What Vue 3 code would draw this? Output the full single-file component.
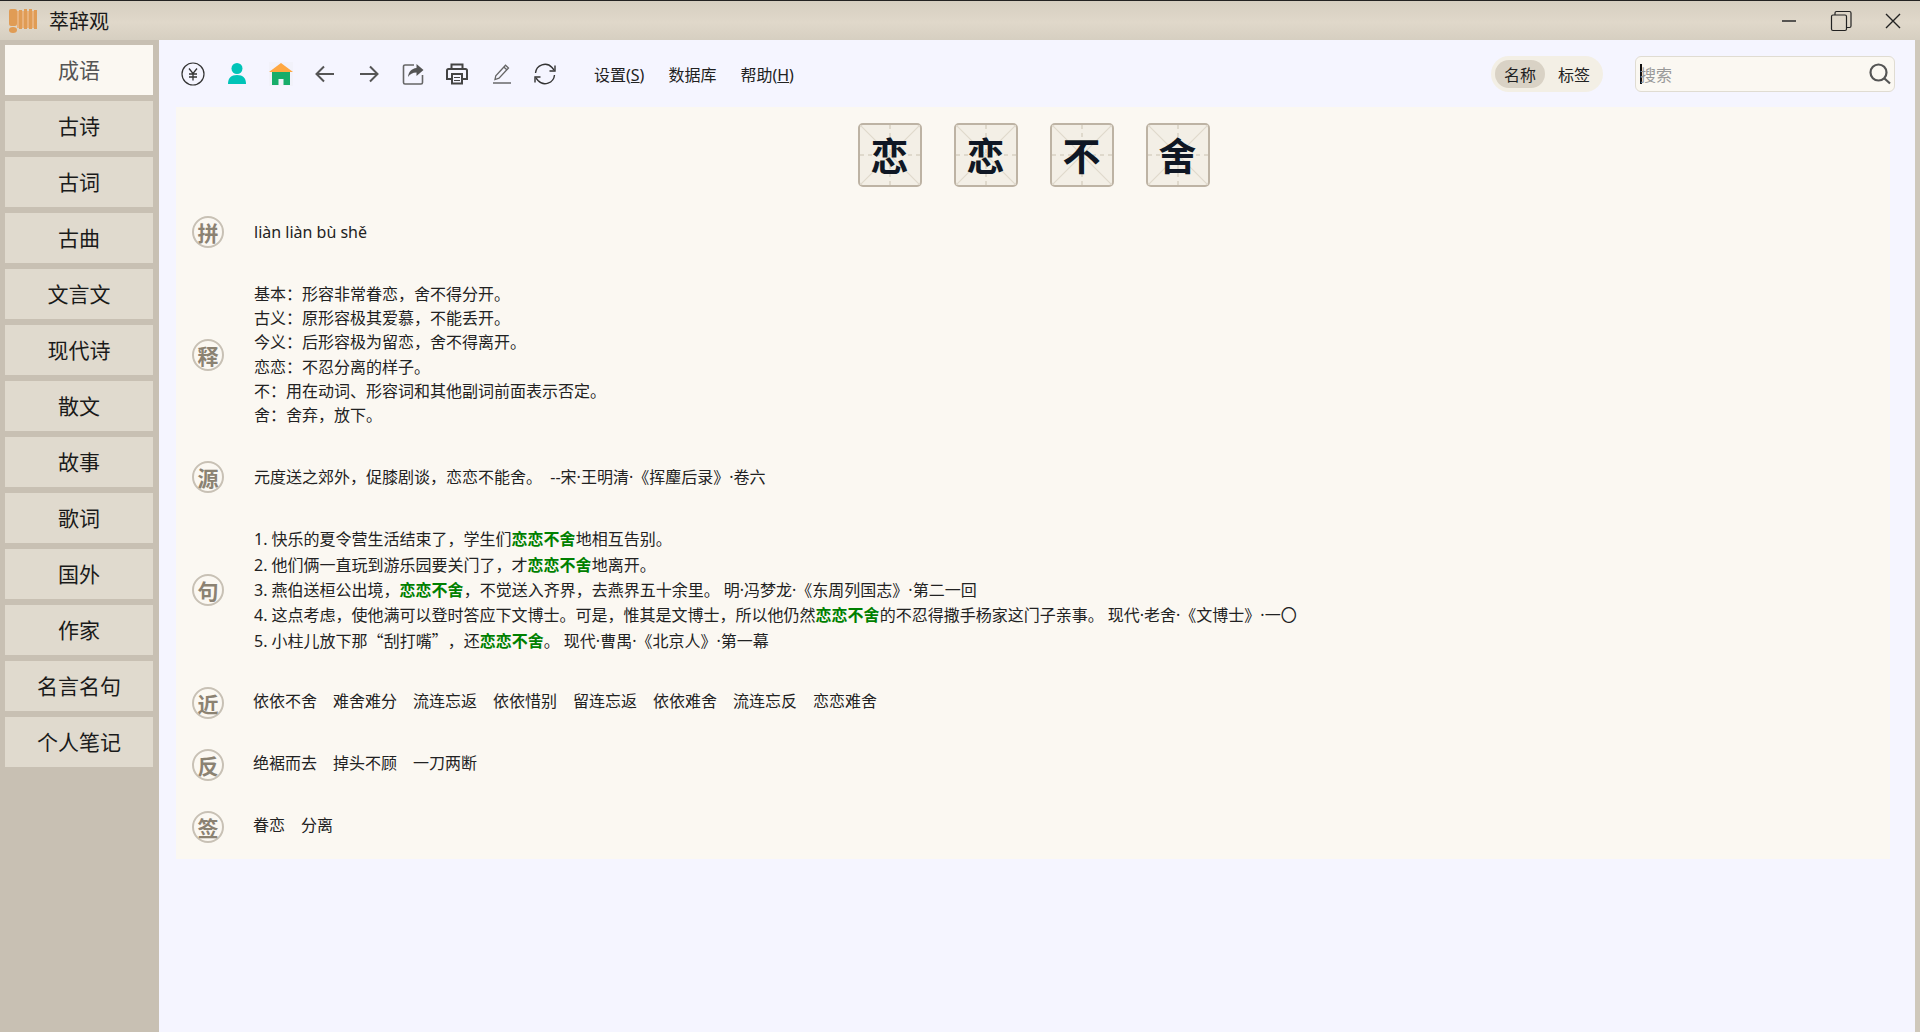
<script setup>
const tabs = ['成语','古诗','古词','古曲','文言文','现代诗','散文','故事','歌词','国外','作家','名言名句','个人笔记']
const chars = ['恋','恋','不','舍']
const meaning = ['基本：形容非常眷恋，舍不得分开。','古义：原形容极其爱慕，不能丢开。','今义：后形容极为留恋，舍不得离开。','恋恋：不忍分离的样子。','不：用在动词、形容词和其他副词前面表示否定。','舍：舍弃，放下。']
const near = ['依依不舍','难舍难分','流连忘返','依依惜别','留连忘返','依依难舍','流连忘反','恋恋难舍']
const anti = ['绝裾而去','掉头不顾','一刀两断']
const tags = ['眷恋','分离']
const sentences = [
  ['1. 快乐的夏令营生活结束了，学生们','地相互告别。'],
  ['2. 他们俩一直玩到游乐园要关门了，才','地离开。'],
  ['3. 燕伯送桓公出境，','，不觉送入齐界，去燕界五十余里。 明·冯梦龙·《东周列国志》·第二一回'],
  ['4. 这点考虑，使他满可以登时答应下文博士。可是，惟其是文博士，所以他仍然','的不忍得撒手杨家这门子亲事。 现代·老舍·《文博士》·一〇'],
]
</script>

<template>
  <div class="app">
    <header class="titlebar">
      <svg class="logo" viewBox="0 0 28 24" width="28" height="24">
        <rect x="8" y="2" width="20" height="17" fill="#e9b27c"/>
        <g fill="#e09c55">
          <rect x="0" y="0" width="8" height="17" rx="2"/><ellipse cx="4" cy="21" rx="4" ry="3"/>
          <rect x="10" y="1" width="3" height="19"/><rect x="15" y="0" width="3" height="20"/><rect x="20" y="0" width="3" height="20"/><rect x="25" y="1" width="3" height="19"/>
        </g>
      </svg>
      <span class="apptitle">萃辞观</span>
      <div class="winbtns">
        <svg width="16" height="16" viewBox="0 0 16 16"><path d="M1 8h14" stroke="#333" stroke-width="1.6"/></svg>
        <svg width="22" height="22" viewBox="0 0 22 22" fill="none" stroke="#222" stroke-width="1.2"><rect x="1.500" y="5" width="15" height="15.500" rx="1.500"/><path d="M5 5V3a1.500 1.500 0 0 1 1.500-1.500h13A1.500 1.500 0 0 1 21 3v13a1.500 1.500 0 0 1-1.500 1.500h-3"/></svg>
        <svg width="16" height="16" viewBox="0 0 16 16"><path d="M1 1l14 14M15 1L1 15" stroke="#222" stroke-width="1.400"/></svg>
      </div>
    </header>
    <div class="body">
      <nav class="side">
        <div v-for="(t,i) in tabs" :key="t" class="tab" :class="{active:i===0}">{{ t }}</div>
      </nav>
      <main class="main">
        <div class="toolbar">
          <div class="icons">
            <svg viewBox="0 0 24 24" class="ic"><circle cx="12" cy="12" r="11" fill="none" stroke="#333" stroke-width="1.200"/><path d="M8 6.500l4 5 4-5M12 11.500V18.500M8 12h8M8 15h8" fill="none" stroke="#333" stroke-width="1.300"/></svg>
            <svg viewBox="0 0 24 24" class="ic"><circle cx="12" cy="6.500" r="5.500" fill="#00c4b8"/><path d="M3 22c0-6 3-9 9-9s9 3 9 9z" fill="#00c4b8"/></svg>
            <svg viewBox="0 0 24 24" class="ic home"><path d="M12 1L0 10h24z" fill="#ffa842"/><path d="M3 10h18v13h-6.500v-6h-5v6H3z" fill="#17ad6a"/></svg>
            <svg viewBox="0 0 24 24" class="ic"><path d="M21 12H4M11 4.500L3.500 12l7.500 7.500" fill="none" stroke="#555" stroke-width="2"/></svg>
            <svg viewBox="0 0 24 24" class="ic"><path d="M3 12h17M13 4.500l7.500 7.500-7.500 7.500" fill="none" stroke="#555" stroke-width="2"/></svg>
            <svg viewBox="0 0 24 24" class="ic"><path d="M13 3H4a1.500 1.500 0 0 0-1.500 1.500v16A1.500 1.500 0 0 0 4 22h16a1.500 1.500 0 0 0 1.500-1.500V13" fill="none" stroke="#666" stroke-width="1.600"/><path d="M15.500 2l7 6-7 6v-3.500c-4 0-6.500 1.500-8.500 4.500 .5-5 3.500-8.500 8.500-9z" fill="#555"/></svg>
            <svg viewBox="0 0 24 24" class="ic"><path d="M6.500 7V2.500h11V7M6 17H2V8.500A1.500 1.500 0 0 1 3.500 7h17A1.500 1.500 0 0 1 22 8.500V17h-4" fill="none" stroke="#444" stroke-width="2"/><rect x="7" y="12" width="10" height="9.500" fill="none" stroke="#444" stroke-width="2"/><path d="M9 15.500h6M9 18.500h6" stroke="#444" stroke-width="1.200"/></svg>
            <svg viewBox="0 0 24 24" class="ic"><path d="M4 21h18" stroke="#444" stroke-width="1.200"/><path d="M6 17.500l.8-3.800L16.500 3.200l3 2.800L10 16.200z" fill="none" stroke="#666" stroke-width="1.300"/><path d="M14.800 5l3 2.800" stroke="#666" stroke-width="1.300"/></svg>
            <svg viewBox="0 0 24 24" class="ic"><path d="M2.500 11A9.500 9.500 0 0 1 19 5.500L21 8M21.500 13A9.500 9.500 0 0 1 5 18.500L3 16" fill="none" stroke="#333" stroke-width="1.400"/><path d="M22 3.500V9h-5.500M2 20.500V15h5.500" fill="none" stroke="#333" stroke-width="1.400"/></svg>
          </div>
          <div class="menu"><span>设置(<u>S</u>)</span><span>数据库</span><span>帮助(<u>H</u>)</span></div>
          <div class="pill"><span class="on">名称</span><span class="off">标签</span></div>
          <div class="search">
            <i class="caret"></i><span class="ph">搜索</span>
            <svg width="24" height="24" viewBox="0 0 24 24" fill="none" stroke="#555" stroke-width="2.200"><circle cx="10.500" cy="10.500" r="8"/><path d="M16.500 16.500l5.500 5"/></svg>
          </div>
        </div>
        <section class="card">
          <div class="heading">
            <div v-for="(c,i) in chars" :key="i" class="cell">
              <svg class="grid" viewBox="0 0 60 60"><path d="M0 0L60 60M60 0L0 60" stroke="#dfd9cc" stroke-width="1.200"/><path d="M30 0V60M0 30H60" stroke="#d9d2c3" stroke-width="1.500" stroke-dasharray="4 4"/></svg>
              <span>{{ c }}</span>
            </div>
          </div>
          <div class="row"><b class="seal">拼</b><div class="txt">liàn liàn bù shě</div></div>
          <div class="row"><b class="seal">释</b><div class="txt multi"><div v-for="m in meaning" :key="m">{{ m }}</div></div></div>
          <div class="row"><b class="seal">源</b><div class="txt">元度送之郊外，促膝剧谈，恋恋不能舍。 &nbsp;--宋·王明清·《挥麈后录》·卷六</div></div>
          <div class="row"><b class="seal">句</b><div class="txt multi sent">
            <div v-for="s in sentences" :key="s[0]">{{ s[0] }}<em>恋恋不舍</em>{{ s[1] }}</div>
            <div>5. 小柱儿放下那<span class="cjk">“</span>刮打嘴<span class="cjk">”，</span>还<em>恋恋不舍</em>。 现代·曹禺·《北京人》·第一幕</div>
          </div></div>
          <div class="row"><b class="seal">近</b><div class="words"><span v-for="w in near" :key="w">{{ w }}</span></div></div>
          <div class="row"><b class="seal">反</b><div class="words"><span v-for="w in anti" :key="w">{{ w }}</span></div></div>
          <div class="row"><b class="seal">签</b><div class="words"><span v-for="w in tags" :key="w">{{ w }}</span></div></div>
        </section>
      </main>
    </div>
  </div>
</template>

<style>
html, body { margin: 0; }
body { overflow: hidden; }
</style>

<style scoped>
.app { width: 1920px; height: 1032px; display: flex; flex-direction: column; font-family: "Noto Sans", "Noto Sans CJK SC", sans-serif; color: #222; overflow: hidden; text-spacing-trim: space-all; }
.titlebar { height: 39px; border-top: 1px solid #222; background: linear-gradient(#d6cfc1, #e0d8ca 55%, #d6cfc1); display: flex; align-items: center; padding-left: 9px; flex: none; }
.logo { margin-right: 12px; }
.apptitle { font-size: 20px; color: #1a1a1a; }
.winbtns { margin-left: auto; display: flex; align-items: center; gap: 33px; padding-right: 19px; }
.body { flex: 1; display: flex; min-height: 0; }
.side { width: 159px; background: #c8c0b3; padding: 5px; box-sizing: border-box; display: flex; flex-direction: column; gap: 6px; flex: none; }
.tab { height: 50px; width: 148px; box-sizing: border-box; padding-bottom: 2px; display: flex; align-items: center; justify-content: center; background: #e0dace; font-size: 21px; color: #1a1a1a; flex: none; }
.tab.active { background: #fbf8f2; color: #555; }
.main { flex: 1; background: #f5f5ff; border-right: 5px solid #cfc8bb; padding: 0 25px 0 17px; min-width: 0; }
.toolbar { height: 67px; display: flex; align-items: center; padding-left: 5px; margin-right: -5px; }
.icons { display: flex; gap: 20px; margin-right: 37px; }
.ic { width: 24px; height: 24px; display: block; flex: none; }
.home { background: #f2f2fa; }
.menu { display: flex; gap: 24px; font-size: 16px; }
.pill { margin-left: auto; width: 112px; height: 36px; box-sizing: border-box; border-radius: 18px; background: #f3efe5; padding: 4px; display: flex; align-items: center; font-size: 16px; margin-right: 32px; }
.pill span { width: 52px; height: 28px; display: flex; align-items: center; justify-content: center; border-radius: 14px; }
.pill .on { background: #d9d2c5; }
.pill .off { padding-left: 4px; }
.search { width: 260px; height: 36px; box-sizing: border-box; border: 1px solid #e0dcd2; border-radius: 6px; background: #fbf8f2; display: flex; align-items: center; padding: 0 2px 0 4px; }
.caret { width: 2px; height: 20px; background: #111; flex: none; }
.ph { font-size: 16px; color: #999; margin-left: -2px; }
.search svg { margin-left: auto; }
.card { background: #fbf8f2; }
.heading { height: 95px; display: flex; justify-content: center; align-items: center; gap: 32px; padding-left: 1px; box-sizing: border-box; }
.cell { width: 64px; height: 64px; box-sizing: border-box; border: 2px solid #bdb3a4; border-radius: 5px; background: #f3efe6; position: relative; display: flex; align-items: center; justify-content: center; padding-top: 1px; }
.grid { position: absolute; inset: 0; width: 100%; height: 100%; }
.cell span { position: relative; font-size: 38px; font-weight: 700; color: #0f1724; line-height: 1; }
.row { display: flex; align-items: center; padding: 15px 0 15px 16px; }
.seal { width: 32px; height: 32px; box-sizing: border-box; border: 2px solid #c8c1b5; border-radius: 50%; display: flex; align-items: center; justify-content: center; font-size: 21px; font-weight: 700; color: #8b8272; flex: none; margin: -1px 0 1px; }
.txt { margin-left: 30px; font-size: 16px; line-height: 24.2px; color: #222; position: relative; top: -1px; }
.multi { padding: 4px 0; }
.sent { line-height: 25.400px; padding-bottom: 3px; top: -1px; }
.sent em { font-style: normal; font-weight: 700; color: #008000; }
.cjk { font-family: "Noto Sans CJK SC", sans-serif; line-height: 1; }
.words { margin-left: 29px; display: flex; gap: 16px; font-size: 16px; line-height: 24px; position: relative; top: -3px; }
</style>
